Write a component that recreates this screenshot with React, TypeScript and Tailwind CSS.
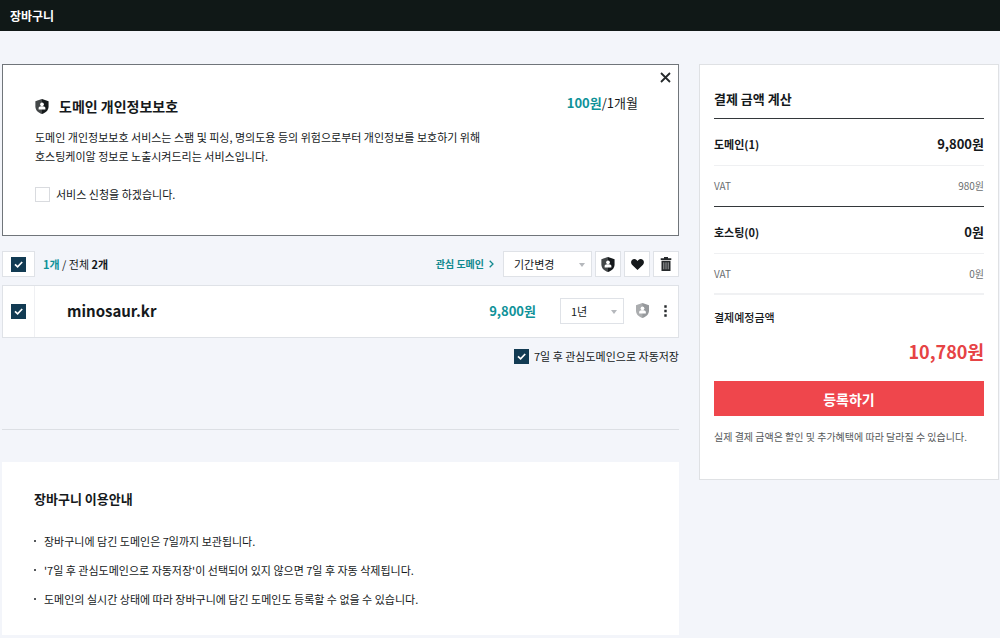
import { useState } from 'react';
import type { ReactNode } from 'react';

function ShieldIcon({ className }: { className: string }) {
  return (
    <svg viewBox="0 0 14 16" className={className} aria-hidden="true">
      <path fill="currentColor" d="M7 0 14 2.300V8c0 4-3 6.700-7 8C3 14.700 0 12 0 8V2.300Z" />
      <path fill="#fff" fillOpacity=".2" d="M7 0 0 2.300V8c0 4 3 6.700 7 8Z" />
      <circle cx="7" cy="5.700" r="2" fill="#fff" />
      <path fill="#fff" d="M3.400 11.200V9.600C3.400 8.300 4.600 7.800 6 7.700h2c1.400.1 2.600.6 2.600 1.900v1.600Z" />
    </svg>
  );
}

function HeartIcon() {
  return (
    <svg viewBox="0 0 14 12" className="h-[11px] w-[13px]" aria-hidden="true">
      <path fill="#15191b" d="M7 12 1 6.200C-.4 4.700-.3 2.400 1 1.100c1.400-1.400 3.600-1.400 5 0l1 1 1-1c1.400-1.400 3.600-1.400 5 0 1.300 1.300 1.400 3.600 0 5.100Z" />
    </svg>
  );
}

function TrashIcon() {
  return (
    <svg viewBox="0 0 12 14" className="h-[14px] w-[12px]" aria-hidden="true">
      <path fill="#25292b" d="M4 0h4v1.300h3.300V3H.7V1.300H4ZM1.500 3.700h9V14h-9Z" />
      <path stroke="#fff" strokeOpacity=".7" strokeWidth=".8" d="M3.800 5.300v7M6 5.300v7M8.200 5.300v7" />
    </svg>
  );
}

function Checkbox({ id, label, defaultChecked = false }: { id: string; label?: string; defaultChecked?: boolean }) {
  return (
    <span className="relative inline-flex shrink-0">
      <input
        id={id}
        type="checkbox"
        aria-label={label}
        defaultChecked={defaultChecked}
        className="peer size-[15px] appearance-none border border-[#d9dbdf] bg-white checked:border-[#123b53] checked:bg-[#123b53]"
      />
      <svg viewBox="0 0 15 15" className="pointer-events-none absolute inset-0 hidden size-[15px] peer-checked:block" aria-hidden="true">
        <path d="m4 7.300 2.600 2.600L11.200 5" fill="none" stroke="#fff" strokeWidth="1.700" />
      </svg>
    </span>
  );
}

function Select({ label, options, className }: { label: string; options: string[]; className: string }) {
  return (
    <span className={`relative inline-flex ${className}`}>
      <select aria-label={label} className="h-[26px] w-full appearance-none border border-[#dfe2e7] bg-white pl-[10px] text-[11px] leading-4 text-[#15191b]">
        {options.map((option) => (
          <option key={option}>{option}</option>
        ))}
      </select>
      <svg viewBox="0 0 6 4" className="pointer-events-none absolute top-[12px] right-[7px] h-[4px] w-[6px]" aria-hidden="true">
        <path fill="#b5b8bc" d="M0 0h6L3 4Z" />
      </svg>
    </span>
  );
}

function IconButton({ label, children }: { label: string; children: ReactNode }) {
  return (
    <button type="button" aria-label={label} className="flex size-[26px] items-center justify-center border border-[#dfe2e7] bg-white">
      {children}
    </button>
  );
}

function PriceGroup({ name, price, vat, last = false }: { name: string; price: string; vat: string; last?: boolean }) {
  return (
    <>
      <div className="flex h-[47px] items-center justify-between border-b border-[#eff0f2] pt-1 font-bold">
        <dt className="text-[11px]">{name}</dt>
        <dd className="text-[13px]">{price}</dd>
      </div>
      <div className={`flex h-[41px] items-center justify-between text-[10px] text-[#6b6e70] ${last ? 'border-b-2 border-[#f0f1f3]' : 'border-b border-[#33373a]'}`}>
        <dt>VAT</dt>
        <dd>{vat}</dd>
      </div>
    </>
  );
}

const notices = [
  '장바구니에 담긴 도메인은 7일까지 보관됩니다.',
  "'7일 후 관심도메인으로 자동저장'이 선택되어 있지 않으면 7일 후 자동 삭제됩니다.",
  '도메인의 실시간 상태에 따라 장바구니에 담긴 도메인도 등록할 수 없을 수 있습니다.',
];

export default function App() {
  const [promoOpen, setPromoOpen] = useState(true);

  return (
    <div className="min-h-screen bg-[#f3f5fa] font-['Noto_Sans_CJK_KR','Noto_Sans',sans-serif] text-[11px] leading-5 text-[#15191b]">
      <header className="flex h-[31px] items-center bg-[#101817] px-[10px]">
        <h1 className="text-[12px] font-bold text-white">장바구니</h1>
      </header>

      <div className="flex items-start gap-5 pt-[33px] pr-px pb-[2px] pl-[2px]">
        <main className="min-w-0 flex-1">
          {promoOpen && (
            <section className="relative mb-[15px] border border-[#70757a] bg-white px-8 pt-[30px] pb-[31px]">
              <button type="button" aria-label="닫기" onClick={() => setPromoOpen(false)} className="absolute top-[7px] right-[7px] flex size-[11px]">
                <svg viewBox="0 0 11 11" className="size-[11px]" aria-hidden="true">
                  <path d="m1 1 9 9M10 1l-9 9" stroke="#25292b" strokeWidth="1.800" />
                </svg>
              </button>
              <div className="flex items-start justify-between pr-2">
                <h2 className="flex items-center gap-[10px] text-[14px] leading-[22px] font-bold">
                  <ShieldIcon className="h-[15px] w-[14px] text-[#15191b]" />
                  도메인 개인정보보호
                </h2>
                <p className="text-[13px] leading-4">
                  <strong className="text-[#0f9299]">100원</strong>/1개월
                </p>
              </div>
              <p className="mt-[11px] leading-[19px]">
                도메인 개인정보보호 서비스는 스팸 및 피싱, 명의도용 등의 위험으로부터 개인정보를 보호하기 위해
                <br />
                호스팅케이알 정보로 노출시켜드리는 서비스입니다.
              </p>
              <div className="mt-[18px] flex items-center gap-[6px]">
                <Checkbox id="privacy" />
                <label htmlFor="privacy">서비스 신청을 하겠습니다.</label>
              </div>
            </section>
          )}

          <div className="flex items-center justify-between">
            <div className="flex items-center gap-2">
              <div className="flex h-[26px] w-[33px] items-center justify-center border border-[#dfe2e7] bg-white">
                <Checkbox id="all" label="전체 선택" defaultChecked />
              </div>
              <p>
                <strong className="text-[#0f9299]">1개</strong> / 전체 <strong>2개</strong>
              </p>
            </div>
            <div className="flex items-center gap-[3px]">
              <a href="#wish" className="mr-[6px] flex items-center gap-[5px] text-[10px] font-bold text-[#11898f]">
                관심 도메인
                <svg viewBox="0 0 5 8" className="h-[8px] w-[5px]" aria-hidden="true">
                  <path d="m.7.700 3.300 3.300L.7 7.300" fill="none" stroke="currentColor" strokeWidth="1.300" />
                </svg>
              </a>
              <Select label="기간변경" options={['기간변경', '1년', '2년', '3년']} className="w-[89px]" />
              <IconButton label="개인정보보호">
                <ShieldIcon className="h-[15px] w-[14px] text-[#15191b]" />
              </IconButton>
              <IconButton label="관심 도메인에 저장">
                <HeartIcon />
              </IconButton>
              <IconButton label="삭제">
                <TrashIcon />
              </IconButton>
            </div>
          </div>

          <div className="mt-2 flex h-[53px] border border-[#dfe2e7] bg-white">
            <div className="flex w-[32px] shrink-0 items-center justify-center border-r border-[#eff0f3]">
              <Checkbox id="domain" label="minosaur.kr" defaultChecked />
            </div>
            <div className="flex flex-1 items-center pr-[9px] pb-[2px] pl-8">
              <span className="flex-1 text-[15px] font-bold">minosaur.kr</span>
              <strong className="mr-6 text-[13px] text-[#0f9299]">9,800원</strong>
              <Select label="등록 기간" options={['1년', '2년', '3년']} className="w-[64px]" />
              <button type="button" aria-label="개인정보보호" className="ml-3">
                <ShieldIcon className="h-[15px] w-[13px] text-[#96999c]" />
              </button>
              <button type="button" aria-label="더보기" className="ml-3 flex w-[8px] justify-center">
                <svg viewBox="0 0 3 12" className="h-[12px] w-[3px]" aria-hidden="true">
                  <path fill="#25292b" d="M.3.300h2.400v2.400H.3zM.3 4.800h2.400v2.400H.3zM.3 9.300h2.400v2.400H.3z" />
                </svg>
              </button>
            </div>
          </div>

          <div className="mt-2 flex items-center justify-end gap-[5px]">
            <Checkbox id="autosave" defaultChecked />
            <label htmlFor="autosave">7일 후 관심도메인으로 자동저장</label>
          </div>

          <hr className="mt-[63px] border-[#dcdfe4]" />

          <section className="mt-8 bg-white px-8 pt-[27px] pb-[26px]">
            <h2 className="text-[13px] font-bold">장바구니 이용안내</h2>
            <ul className="mt-[22px] space-y-[9px]">
              {notices.map((notice) => (
                <li key={notice} className="flex items-center gap-2">
                  <span className="size-[2px] bg-[#55585b]" />
                  {notice}
                </li>
              ))}
            </ul>
          </section>
        </main>

        <aside className="w-[300px] shrink-0 border border-[#dfe1e4] bg-white px-[14px] pt-5 pb-8">
          <h2 className="border-b border-[#33373a] pb-[5px] text-[13px] leading-7 font-bold">결제 금액 계산</h2>
          <dl>
            <PriceGroup name="도메인(1)" price="9,800원" vat="980원" />
            <PriceGroup name="호스팅(0)" price="0원" vat="0원" last />
            <div className="pt-3">
              <dt className="font-medium">결제예정금액</dt>
              <dd className="mt-2 text-right text-[18px] leading-8 font-bold text-[#e64345]">10,780원</dd>
            </div>
          </dl>
          <button type="button" className="mt-[14px] h-[35px] w-full bg-[#ef464c] text-[14px] font-bold text-white">
            등록하기
          </button>
          <p className="mt-[11px] text-[10px] text-[#55585a]">실제 결제 금액은 할인 및 추가혜택에 따라 달라질 수 있습니다.</p>
        </aside>
      </div>
    </div>
  );
}
